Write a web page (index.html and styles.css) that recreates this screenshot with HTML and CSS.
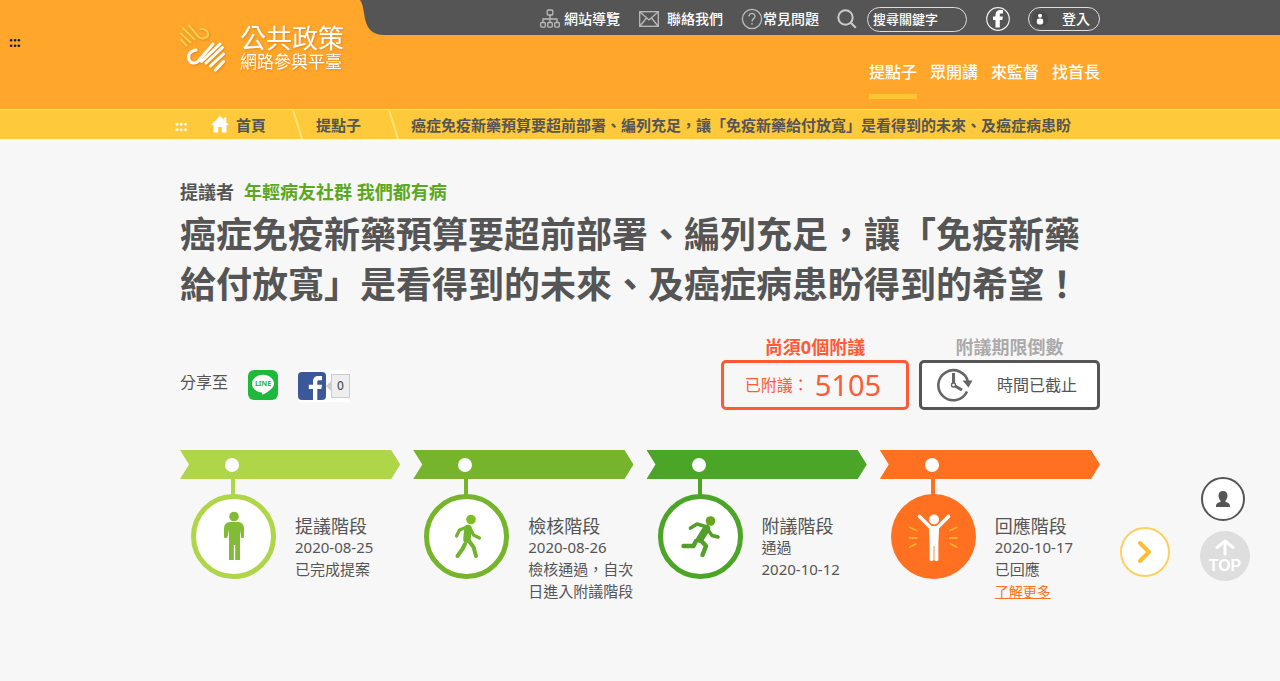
FILE: index.html
```html
<!DOCTYPE html>
<html lang="zh-Hant-TW">
<head>
<meta charset="utf-8">
<meta name="viewport" content="width=device-width, initial-scale=1">
<title>公共政策網路參與平臺</title>
<link rel="stylesheet" href="styles.css">
</head>
<body>
<header class="header">
  <a class="access-key" href="#top-nav">:::</a>
  <a class="logo" href="#">
    <svg class="logo-mark" viewBox="0 0 46 48" fill="none" stroke-linecap="round" stroke-linejoin="round" aria-hidden="true">
      <g stroke="#f2cf4c" stroke-width="2">
        <path d="M1 15.500 6.500 21.500"/>
        <path d="M1 9.500 10.500 18.500"/>
        <path d="M3 4 14.500 15.500"/>
        <path d="M9 1.500 17.500 11.500C21 17 28.500 14 28 9.500 27.500 6.500 24 4.500 20.500 5"/>
      </g>
      <g stroke="#fff" stroke-width="3">
        <path d="M16 26C10 27 7.500 31 9 35.500 10.500 40 15.500 40 18.500 37L33 20"/>
        <path d="M21.500 37.500 40 20"/>
        <path d="M26 39 42.500 23.500"/>
        <path d="M30.500 42 43.500 30"/>
        <path d="M35.500 46 43.500 37.500"/>
      </g>
    </svg>
    <span class="logo-text"><span class="logo-main">公共政策</span><span class="logo-sub">網路參與平臺</span></span>
  </a>
  <div class="topbar">
    <svg class="topbar-curve" viewBox="0 0 24 35" aria-hidden="true"><path fill="#555" d="M0 0C7 9 0 35 24 35V0Z"/></svg>
    <div class="topbar-items" id="top-nav">
      <a class="tool tool-map" href="#">
        <svg width="20" height="20" viewBox="0 0 20 20" fill="none" stroke="#bbb" stroke-width="1.300" aria-hidden="true"><rect x="7.200" y="1" width="5.600" height="5" rx="1"/><rect x=".7" y="13.500" width="4.600" height="4.600" rx="1"/><rect x="7.700" y="13.500" width="4.600" height="4.600" rx="1"/><rect x="14.700" y="13.500" width="4.600" height="4.600" rx="1"/><path d="M10 6v7.500M3 13.500V10h14v3.500"/></svg>
        網站導覽</a>
      <a class="tool tool-mail" href="#">
        <svg width="20" height="16" viewBox="0 0 20 16" fill="none" stroke="#bbb" stroke-width="1.300" aria-hidden="true"><rect x=".7" y=".7" width="18.600" height="14.600"/><path d="m1 1 9 8 9-8M1 15l6.500-8M19 15l-6.500-8"/></svg>
        聯絡我們</a>
      <a class="tool tool-faq" href="#">
        <svg width="22" height="22" viewBox="0 0 22 22" fill="none" stroke="#bbb" stroke-width="1.300" aria-hidden="true"><circle cx="11" cy="11" r="9.600"/><path d="M8 8.500C8 4.500 14 4.500 14 8.300 14 10.800 11 10.500 11 13.500M11 15v1.800"/></svg>
        常見問題</a>
      <form class="search">
        <button class="search-button" type="button" aria-label="搜尋"><svg width="20" height="20" viewBox="0 0 20 20" fill="none" stroke="#ccc" stroke-width="2" aria-hidden="true"><circle cx="8.500" cy="8.500" r="7.200"/><path d="m13.800 13.800 5 5"/></svg></button>
        <input class="search-input" type="text" placeholder="搜尋關鍵字" aria-label="搜尋關鍵字">
      </form>
      <a class="facebook" href="#" aria-label="Facebook"><svg width="24" height="24" viewBox="0 0 24 24" aria-hidden="true"><circle cx="12" cy="12" r="11.300" fill="none" stroke="#eee" stroke-width="1.200"/><path fill="#fff" d="M9.500 20.500V13H7V9.500h2.500V8C9.500 4.800 11.500 3 14 3h3v3.500h-1.700c-1.200 0-1.500.5-1.500 1.500v1.500h3l-.4 3.500h-2.600v7.500Z"/></svg></a>
      <button class="login" type="button"><svg width="16" height="16" viewBox="0 0 16 16" aria-hidden="true"><circle cx="8" cy="8" r="8" fill="#4b4b4b"/><circle cx="8" cy="4.800" r="2" fill="#fff"/><rect x="4.800" y="7.500" width="6.400" height="6" rx="2.200" fill="#fff"/></svg>登入</button>
    </div>
  </div>
  <nav class="main-nav">
    <a class="nav-link nav-active" href="#">提點子</a>
    <a class="nav-link" href="#">眾開講</a>
    <a class="nav-link" href="#">來監督</a>
    <a class="nav-link" href="#">找首長</a>
  </nav>
</header>
<nav class="breadcrumb">
  <div class="wrap crumbs">
    <a class="crumb-key" href="#main">:::</a>
    <a class="crumb crumb-home" href="#"><svg width="18" height="17" viewBox="0 0 18 17" aria-hidden="true"><path fill="#fff" d="M9 0 0 9h2.500v7.500h4.700V11h3.600v5.500h4.700V9H18l-2.700-2.700V1.500h-2.500v2.300Z"/></svg>首頁</a>
    <svg class="crumb-line" viewBox="0 0 12 29" aria-hidden="true"><path d="M1 0 10 29" stroke="#ffe672" stroke-width="2"/></svg>
    <a class="crumb crumb-idea" href="#">提點子</a>
    <svg class="crumb-line" viewBox="0 0 12 29" aria-hidden="true"><path d="M1 0 10 29" stroke="#ffe672" stroke-width="2"/></svg>
    <span class="crumb crumb-current">癌症免疫新藥預算要超前部署、編列充足，讓「免疫新藥給付放寬」是看得到的未來、及癌症病患盼</span>
  </div>
</nav>
<main class="wrap" id="main">
  <p class="proposer">提議者<a class="proposer-name" href="#">年輕病友社群 我們都有病</a></p>
  <h1 class="title">癌症免疫新藥預算要超前部署、編列充足，讓「免疫新藥給付放寬」是看得到的未來、及癌症病患盼得到的希望！</h1>
  <section class="status">
    <div class="share">
      <span class="share-label">分享至</span>
      <a class="share-line" href="#" aria-label="LINE">
        <svg width="30" height="30" viewBox="0 0 30 30" aria-hidden="true"><rect width="30" height="30" rx="6" fill="#1eb93b"/><path fill="#fff" d="M15 4.800C8.800 4.800 4 8.800 4 13.800c0 4.600 4 8 9.500 8.700 1 .2.800 1.300.6 2.500 4.500-2 11.900-6.500 11.900-11.200 0-5-4.800-9-11-9Z"/><text x="15" y="16" text-anchor="middle" class="line-word">LINE</text></svg>
      </a>
      <div class="fb-share">
        <a class="fb-link" href="#" aria-label="Facebook"><svg width="28" height="28" viewBox="0 0 28 28" aria-hidden="true"><rect width="28" height="28" rx="4" fill="#3b5998"/><path fill="#fff" d="M15 28V17h-4.200v-4.300H15V9.500C15 6 17 4 20.500 4H24v4.200h-2.500c-1.700 0-2.200.6-2.200 2v2.500H24l-.7 4.300h-4V28Z"/></svg></a>
        <svg class="fb-tip" width="5" height="10" viewBox="0 0 5 10" aria-hidden="true"><path fill="#ccc" d="M5 0v10L0 5Z"/></svg>
        <span class="fb-count">0</span>
      </div>
    </div>
    <div class="counter counter-votes">
      <h2 class="counter-label">尚須0個附議</h2>
      <div class="counter-box">已附議： <strong class="votes">5105</strong></div>
    </div>
    <div class="counter counter-time">
      <h2 class="counter-label">附議期限倒數</h2>
      <div class="counter-box">
        <svg width="36" height="34" viewBox="0 0 36 34" fill="none" stroke="#666" aria-hidden="true"><path d="M30 23.500A15 15 0 1 1 31 14" stroke-width="2.600"/><path d="M16.500 5v10" stroke-width="3"/><path d="m18 18 7 4" stroke-width="3"/><circle cx="16.500" cy="17" r="2" stroke-width="1.400"/><path d="M25.500 12.500 31.500 19.500 35.500 12.500Z" fill="#666" stroke="none"/></svg>
        <span class="time-text">時間已截止</span>
      </div>
    </div>
  </section>
  <section class="stages">
    <article class="stage stage-propose">
      <div class="stage-bar"><span class="stage-dot"></span></div>
      <div class="stage-body">
        <svg class="stage-icon" viewBox="0 0 86 101" aria-hidden="true"><path d="M42 0v17" stroke="#afd548" stroke-width="4"/><circle cx="42.500" cy="57.500" r="40" fill="#fff" stroke="#afd548" stroke-width="5"/><g fill="#82bb35"><circle cx="43" cy="37.500" r="4.800"/><path d="M39 43h8c4 0 6 3 6 7v8c0 1.500-2.800 1.500-3 0l-1-7v30h-4.800V66h-1.400v15H38V51l-1.500 7c-.3 1.500-3.500 1.500-3.500 0v-8c0-4 2-7 6-7Z"/></g></svg>
        <div class="stage-text"><h3 class="stage-title">提議階段</h3><p class="stage-line">2020-08-25</p><p class="stage-line">已完成提案</p></div>
      </div>
    </article>
    <article class="stage stage-review">
      <div class="stage-bar"><span class="stage-dot"></span></div>
      <div class="stage-body">
        <svg class="stage-icon" viewBox="0 0 86 101" aria-hidden="true"><path d="M42 0v17" stroke="#76b42c" stroke-width="4"/><circle cx="42.500" cy="57.500" r="40" fill="#fff" stroke="#76b42c" stroke-width="5"/><circle cx="47" cy="40.500" r="4.800" fill="#7fbd24"/><g fill="none" stroke="#70b52d" stroke-linecap="round" stroke-linejoin="round"><path d="M44 49.500 43 60" stroke-width="7.500"/><path d="M43 48 35.500 51 32.500 57" stroke-width="3.200"/><path d="m46 49 3.500 7 6 3" stroke-width="3.200"/><path d="m41 65-2.500 5-5 7M43.500 60l6 8 2.500 9" stroke-width="4"/></g></svg>
        <div class="stage-text"><h3 class="stage-title">檢核階段</h3><p class="stage-line">2020-08-26</p><p class="stage-line">檢核通過，自次日進入附議階段</p></div>
      </div>
    </article>
    <article class="stage stage-second">
      <div class="stage-bar"><span class="stage-dot"></span></div>
      <div class="stage-body">
        <svg class="stage-icon" viewBox="0 0 86 101" aria-hidden="true"><path d="M42 0v17" stroke="#4ba527" stroke-width="4"/><circle cx="42.500" cy="57.500" r="40" fill="#fff" stroke="#4ba527" stroke-width="5"/><circle cx="52.500" cy="42" r="4.800" fill="#67a51f"/><g fill="none" stroke="#529f2c" stroke-linecap="round" stroke-linejoin="round"><path d="M48.500 49.500 42 60" stroke-width="7.500"/><path d="m46 47-7-2-6.500 4M50 51l4 5.500 6 1.500" stroke-width="3.600"/><path d="m38 62-2.500 5H25.500M42 60.500l6 6.500-3.500 9" stroke-width="4.400"/></g></svg>
        <div class="stage-text"><h3 class="stage-title">附議階段</h3><p class="stage-line">通過</p><p class="stage-line">2020-10-12</p></div>
      </div>
    </article>
    <article class="stage stage-reply">
      <div class="stage-bar"><span class="stage-dot"></span></div>
      <div class="stage-body">
        <svg class="stage-icon" viewBox="0 0 86 101" aria-hidden="true"><path d="M42 0v17" stroke="#ff7020" stroke-width="4"/><circle cx="42.500" cy="57.500" r="42.500" fill="#ff7020"/><circle cx="43" cy="40.500" r="5" fill="#fff"/><path d="M37.800 47h10.400l-.8 17v17q-2 2.500-4 0V67h-.8v14q-2 2.500-4 0V64Z" fill="#fff"/><path d="M40 49 28.500 37.500M46 49 57.500 37.500" stroke="#fff" stroke-width="3.600" stroke-linecap="round"/><path d="m18 48 8.500 4M18 59h8.500M18 68.500l7.500-4M66.500 48 58 52M66.500 59H58M66.500 68.500l-7.500-4" stroke="#ffb02e" stroke-width="1.800"/></svg>
        <div class="stage-text"><h3 class="stage-title">回應階段</h3><p class="stage-line">2020-10-17</p><p class="stage-line">已回應</p><a class="stage-more" href="#">了解更多</a></div>
      </div>
    </article>
    <button class="next" type="button" aria-label="下一個"><svg width="16" height="24" viewBox="0 0 16 24" fill="none" stroke="#ffbe32" stroke-width="4" stroke-linecap="round" stroke-linejoin="round" aria-hidden="true"><path d="m3 3 9 9-9 9"/></svg></button>
  </section>
</main>
<aside class="floating">
  <button class="member" type="button" aria-label="會員"><svg width="14" height="16" viewBox="0 0 14 16" fill="#555" aria-hidden="true"><path d="M7 0c3 0 4.500 2 4.500 4.500 0 2.500-1 4-2 5V11c3 .5 4.500 1.500 4.500 5H0c0-3.500 1.500-4.500 4.500-5V9.500c-1-1-2-2.500-2-5C2.500 2 4 0 7 0Z"/></svg></button>
  <a class="to-top" href="#"><svg width="20" height="17" viewBox="0 0 20 17" fill="none" stroke="#fff" stroke-width="3" stroke-linecap="round" stroke-linejoin="round" aria-hidden="true"><path d="M10 15V2M2 8.500 10 2l8 6.500"/></svg>TOP</a>
</aside>
</body>
</html>
```
FILE: styles.css
```css
* { box-sizing: border-box; }
body {
  margin: 0;
  background: #f7f7f7;
  color: #555;
  font-family: "Noto Sans", "Noto Sans CJK TC", sans-serif;
  font-size: 15px;
  line-height: 22px;
}
a { color: inherit; text-decoration: none; }
button, input { font: inherit; }
svg { display: block; flex: none; }
h1, h2, h3, p { margin: 0; }
.wrap { width: 100%; max-width: 920px; margin: 0 auto; }

.header {
  display: grid;
  grid-template-columns: 1fr 180px minmax(0, 740px) 1fr;
  grid-template-rows: 35px 74px;
  background: #ffa62b;
}
.access-key {
  grid-column: 1;
  grid-row: 1 / 3;
  padding: 31px 0 0 9px;
  color: #111;
  font-size: 14px;
  font-weight: 700;
}
.logo {
  grid-column: 2;
  grid-row: 1 / 3;
  display: flex;
  gap: 14px;
  padding-top: 18px;
  color: #fff;
  filter: drop-shadow(1px 1px 1px rgba(160, 90, 0, .35));
}
.logo-mark { width: 46px; height: 48px; margin-top: 6px; }
.logo-text { display: flex; flex-direction: column; white-space: nowrap; }
.logo-main { font-family: "Noto Sans CJK TC", sans-serif; font-size: 26px; line-height: 38px; }
.logo-sub { height: 0; font-family: "Noto Sans CJK TC", sans-serif; font-size: 17px; line-height: 10px; }
.topbar {
  grid-column: 3 / 5;
  grid-row: 1;
  display: flex;
}
.topbar-curve { width: 24px; height: 35px; }
.topbar-items {
  flex: 1;
  display: flex;
  align-items: center;
  justify-content: flex-end;
  padding: 3px max(0px, calc(50vw - 460px)) 0 0;
  background: #555;
  color: #fff;
  font-size: 14px;
  font-weight: 500;
  white-space: nowrap;
}
.tool { display: flex; align-items: center; }
.tool-map { gap: 4px; margin-right: 19px; }
.tool-mail { gap: 8px; margin-right: 18px; }
.tool-faq { margin-right: 18px; }
.search { display: flex; align-items: center; gap: 10px; }
.search-button { padding: 0; border: 0; background: none; }
.search-input {
  width: 100px;
  height: 25px;
  padding: 0 5px;
  border: 1px solid #ddd;
  border-radius: 13px;
  background: transparent;
  color: #fff;
  font-size: 13px;
}
.search-input::placeholder { color: #fff; opacity: 1; }
.facebook { margin: 0 18px 0 19px; }
.login {
  display: flex;
  align-items: center;
  justify-content: space-between;
  width: 72px;
  height: 24px;
  padding: 0 9px 0 3px;
  border: 1px solid #ddd;
  border-radius: 12px;
  background: transparent;
  color: #fff;
}
.main-nav {
  grid-column: 3;
  grid-row: 2;
  display: flex;
  justify-content: flex-end;
  gap: 13px;
  padding-top: 26px;
}
.nav-link {
  height: 38px;
  border-bottom: 5px solid transparent;
  color: #fff;
  font-size: 16px;
  font-weight: 500;
}
.nav-active { border-color: #ffc532; }

.breadcrumb { border-top: 1px solid #ffe0a8; background: #ffc93c; }
.crumbs {
  display: flex;
  align-items: center;
  height: 29px;
  font-weight: 700;
  white-space: nowrap;
}
.crumb-key { width: 36px; margin-left: -5px; color: #fff; }
.crumb { display: flex; align-items: center; gap: 7px; }
.crumb-home { margin-right: 26px; }
.crumb-idea { margin: 0 27px 0 12px; }
.crumb-current { margin-left: 11px; }
.crumb-line { width: 12px; height: 29px; }

.proposer {
  padding-top: 40px;
  font-size: 18px;
  font-weight: 700;
  line-height: 26px;
}
.proposer-name { margin-left: 10px; color: #5ca722; }
.title { padding-top: 5px; font-size: 36px; font-weight: 700; line-height: 50px; }

.status { display: flex; gap: 10px; padding-top: 26px; }
.share {
  flex: 1;
  display: flex;
  align-items: flex-start;
  padding-top: 34px;
}
.share-label { width: 68px; font-size: 16px; line-height: 24px; }
.line-word { font: 700 7px "Noto Sans", sans-serif; fill: #1eb93b; }
.fb-share {
  display: flex;
  align-items: center;
  height: 32px;
  margin-left: 20px;
  background: #fff;
}
.fb-link, .share-line { display: block; }
.fb-count {
  width: 19px;
  height: 24px;
  border: 1px solid #ccc;
  background: #eee;
  font-size: 12px;
  font-weight: 500;
  text-align: center;
}
.counter-label {
  padding-bottom: 2px;
  font-size: 18px;
  line-height: 22px;
  text-align: center;
}
.counter-box {
  display: flex;
  align-items: center;
  justify-content: center;
  height: 50px;
  border: 3px solid #555;
  border-radius: 5px;
  font-size: 16px;
}
.counter-votes { width: 188px; color: #ff5a36; }
.counter-votes .counter-box { gap: 6px; padding-right: 4px; border-color: #ff5a36; }
.votes { font-size: 29px; font-weight: 400; }
.counter-time { width: 181px; }
.counter-time .counter-label { color: #aaa; }
.counter-time .counter-box { gap: 24px; padding-right: 5px; background: #fff; }

.stages {
  position: relative;
  display: grid;
  grid-template-columns: repeat(4, minmax(0, 1fr));
  gap: 13px;
  padding: 40px 0;
}
.stage-bar {
  height: 29px;
  padding: 8px 0 0 45px;
  background: var(--stage-color);
  clip-path: polygon(0 0, calc(100% - 9px) 0, 100% 50%, calc(100% - 9px) 100%, 0 100%, 9px 50%);
}
.stage-dot { display: block; width: 14px; height: 14px; border-radius: 50%; background: #fff; }
.stage-propose { --stage-color: #afd548; }
.stage-review { --stage-color: #76b42c; }
.stage-second { --stage-color: #4ba527; }
.stage-reply { --stage-color: #ff7020; }
.stage-body { display: flex; padding-left: 11px; }
.stage-icon { width: 86px; height: 101px; }
.stage-text { flex: 1; margin-left: 18px; padding-top: 37px; }
.stage-title { font-size: 18px; font-weight: 400; line-height: 20px; }
.stage-more { color: #ff7020; font-size: 14px; text-decoration: underline; }
.next {
  position: absolute;
  top: 117px;
  right: -70px;
  display: grid;
  place-items: center;
  width: 50px;
  height: 50px;
  padding: 0;
  border: 2px solid #ffd061;
  border-radius: 50%;
  background: #fff;
}

.floating {
  position: fixed;
  right: 30px;
  bottom: 100px;
  display: flex;
  flex-direction: column;
  align-items: center;
  gap: 10px;
}
.member {
  display: grid;
  place-items: center;
  width: 44px;
  height: 44px;
  margin-right: 4px;
  border: 2px solid #555;
  border-radius: 50%;
  background: #fff;
}
.to-top {
  display: flex;
  flex-direction: column;
  align-items: center;
  width: 50px;
  height: 50px;
  padding-top: 8px;
  border-radius: 50%;
  background: #dedede;
  color: #fff;
  font-family: "Liberation Sans", sans-serif;
  font-size: 16px;
  font-weight: 700;
  line-height: 19px;
}
```
